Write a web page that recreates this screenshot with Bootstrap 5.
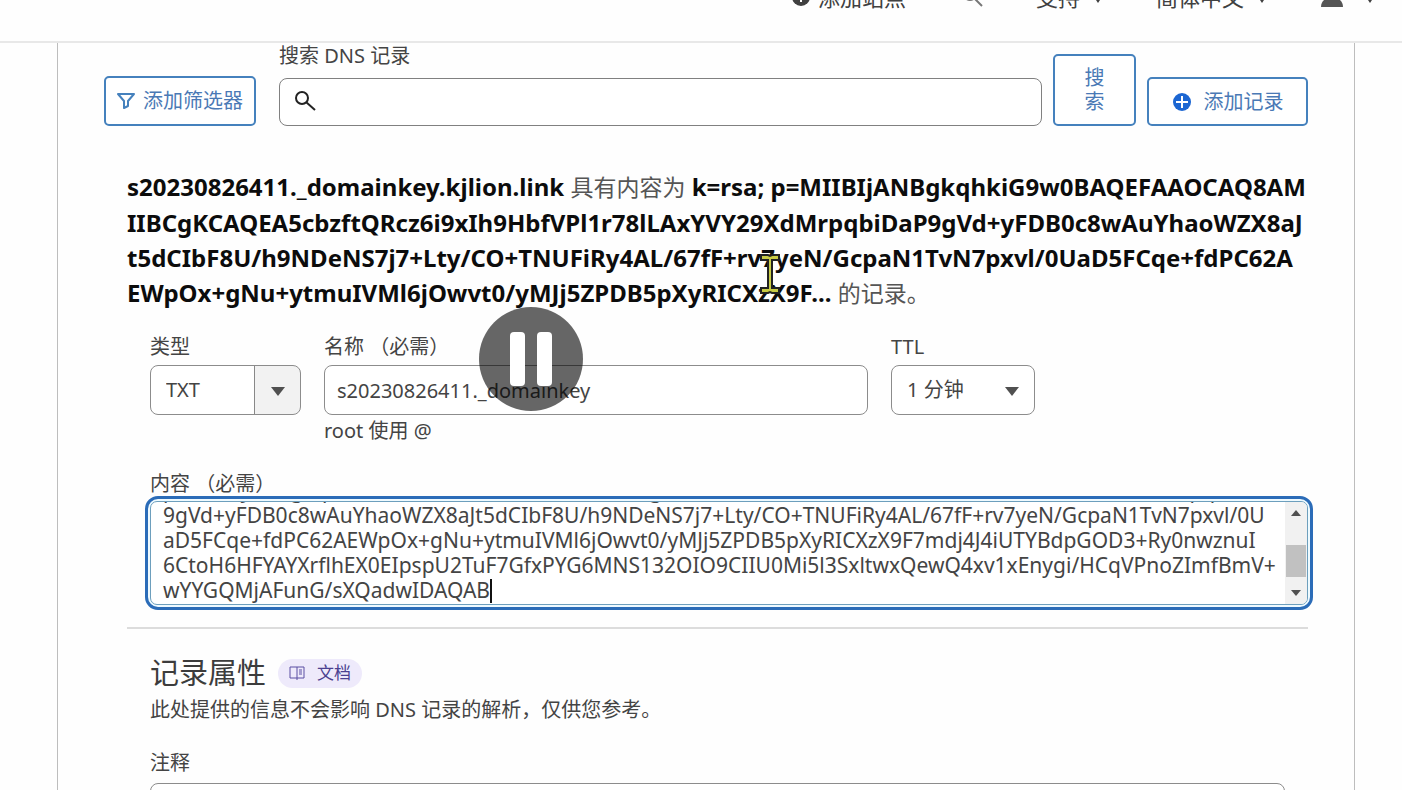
<!DOCTYPE html>
<html lang="zh-CN">
<head>
<meta charset="utf-8">
<meta name="viewport" content="width=device-width, initial-scale=1">
<title>DNS 记录</title>
<link href="https://cdn.jsdelivr.net/npm/bootstrap@5.3.0/dist/css/bootstrap.min.css" rel="stylesheet">
<style>
  body { font: 20px/24px "Noto Sans", "Noto Sans CJK SC", sans-serif; font-weight: 400; color: #444; background: #fefefe; height: 100vh; overflow: hidden; }
  .topbar { height: 90px; margin-top: -47px; padding-right: 22px; border-bottom: 2px solid #e8e8e8; font-size: 22px; }
  .topbar a { color: #404040; text-decoration: none; display: flex; align-items: center; }
  .panel { margin: 0 47px 0 57px; padding: 1px 46px 0; border: solid #bdbdbd; border-width: 0 1px; height: calc(100vh - 43px); overflow: hidden; }
  .outline-blue { color: #4a79b5; border: 2px solid #4581bd; border-radius: 5px; background: #fff; font-size: 20px; line-height: 24px; padding: 0; height: 50px; }
  .w-filter { width: 152px; }
  .w-add { width: 161px; height: 49px; margin-left: 11px; }
  .w-search { width: 83px; height: 72px; }
  .search-col { margin: 0 11px 0 23px; }
  .search-col label { margin-bottom: 10px; }
  .field { border: 1px solid #8c8c8c; border-radius: 8px; background-color: #fff; color: #444; font-size: 20px; line-height: 24px; height: 50px; padding: 0 12px; }
  .field:focus { box-shadow: none; }
  .search-field { height: 48px; border-color: #808080; padding-left: 48px; }
  .glass { left: 16px; top: 13px; }
  .form-area { margin-left: 23px; }
  .inset { padding: 0 23px; }
  .summary { margin: 43px 23px 0; font-size: 24px; line-height: 35px; color: #555; white-space: nowrap; }
  .summary b { color: #0c0c0c; font-weight: 700; }
  .summary span { font-size: 23px; }
  .record-row { gap: 23px; margin-top: 24px; }
  .record-row label { margin-bottom: 6px; }
  .pick { appearance: none; background-image: none; padding-left: 15px; width: 151px; }
  .pick-type { background: linear-gradient(to right, #fff 103px, #888 103px 104px, #f2f2f2 104px); }
  .pick-ttl { width: 144px; }
  .tri { right: 16px; top: 22px; pointer-events: none; }
  .name-col { flex: 0 1 544px; }
  .next-label { margin-top: 29px; }
  .content-wrap { margin: 0 -5px 0 18px; border: 3px solid #2b6cb8; border-radius: 13px; padding: 2px; background: #eefaff; height: 114px; }
  .content-in { border: 1px solid #6d9fbd; border-radius: 7px; background: #fff; height: 104px; overflow: hidden; }
  .content-in textarea { border: 0; outline: 0; resize: none; overflow: hidden; height: 102px; padding: 0 0 0 12px; margin: 0; color: #444; font-size: 21px; line-height: 25px; white-space: pre; background: transparent; }
  .bar-track { width: 22px; background: #f1f1f1; }
  .bar-thumb { width: 20px; height: 32px; background: #c1c1c1; }
  .caret { left: 339px; bottom: 1px; width: 2px; height: 24px; background: #111; }
  .rule { height: 2px; background: #dcdcdc; margin-top: 17px; }
  .attr-head { margin-top: 26px; margin-bottom: 7px; }
  .attr-title { font-size: 29px; line-height: 36px; margin: 0 12px 0 0; color: #3c3c3c; font-weight: 400; }
  .doc-pill { width: 84px; height: 29px; border-radius: 15px; background: #eeeafb; color: #4b4190; font-size: 17px; text-decoration: none; }
  .pause { position: fixed; left: 479px; top: 307px; width: 104px; height: 104px; border: 0; padding: 0; background: none; }
  .ibeam { position: fixed; left: 759px; top: 253px; }
</style>
</head>
<body>
<header class="topbar d-flex align-items-center justify-content-end">
  <a href="#"><svg width="18" height="18" viewBox="0 0 18 18" class="me-2"><circle cx="9" cy="9" r="9" fill="#404040"/><path d="M9 4v10M4 9h10" stroke="#fff" stroke-width="2"/></svg>添加站点</a>
  <a href="#" class="ms-5 ps-2" aria-label="搜索"><svg width="22" height="22" viewBox="0 0 22 22" fill="none" stroke="#777" stroke-width="2"><circle cx="8" cy="8" r="6"/><path d="M12 12L20 20"/></svg></a>
  <a href="#" class="ms-5 ps-1">支持<svg class="ms-2" width="20" height="14" viewBox="0 0 20 14"><path d="M4 4h12l-6 9z" fill="#404040"/></svg></a>
  <a href="#" class="ms-5">简体中文<svg class="ms-2" width="20" height="14" viewBox="0 0 20 14"><path d="M4 4h12l-6 9z" fill="#404040"/></svg></a>
  <a href="#" class="ms-5" aria-label="账户"><svg width="24" height="24" viewBox="0 0 24 24" fill="#555"><circle cx="12" cy="6" r="6"/><path d="M1 22C1 9 23 9 23 22z"/></svg><svg class="ms-3" width="20" height="14" viewBox="0 0 20 14"><path d="M4 4h12l-6 9z" fill="#404040"/></svg></a>
</header>
<main class="panel">
  <form class="d-flex align-items-end">
    <button type="button" class="btn outline-blue w-filter d-flex align-items-center justify-content-center"><svg class="me-2" width="18" height="18" viewBox="0 0 18 18" fill="none" stroke="#4581bd" stroke-width="2" stroke-linejoin="round"><path d="M1 2h16l-6 7v5l-4 2V9z"/></svg>添加筛选器</button>
    <div class="flex-grow-1 search-col">
      <label for="q" class="d-block">搜索 DNS 记录</label>
      <div class="position-relative">
        <input id="q" type="text" class="form-control field search-field">
        <svg class="position-absolute glass" width="22" height="22" viewBox="0 0 22 22" fill="none" stroke="#222" stroke-width="2"><circle cx="7" cy="7" r="6"/><path d="M11 11L20 19"/></svg>
      </div>
    </div>
    <button type="button" class="btn outline-blue w-search">搜<br>索</button>
    <button type="button" class="btn outline-blue w-add d-flex align-items-center justify-content-center"><svg class="me-2" width="20" height="20" viewBox="0 0 20 20"><circle cx="10" cy="10" r="9" fill="#1c66d2"/><path d="M10 4v12M4 10h12" stroke="#fff" stroke-width="2"/></svg><span class="ps-1">添加记录</span></button>
  </form>

  <p class="summary"><b>s20230826411._domainkey.kjlion.link</b> <span>具有内容为</span> <b>k=rsa; p=MIIBIjANBgkqhkiG9w0BAQEFAAOCAQ8AM<br>IIBCgKCAQEA5cbzftQRcz6i9xIh9HbfVPl1r78lLAxYVY29XdMrpqbiDaP9gVd+yFDB0c8wAuYhaoWZX8aJ<br>t5dCIbF8U/h9NDeNS7j7+Lty/CO+TNUFiRy4AL/67fF+rv7yeN/GcpaN1TvN7pxvl/0UaD5FCqe+fdPC62A<br>EWpOx+gNu+ytmuIVMl6jOwvt0/yMJj5ZPDB5pXyRICXzX9F...</b> <span>的记录。</span></p>

  <form class="form-area">
    <div class="inset">
      <div class="d-flex record-row">
        <div>
          <label for="type" class="d-block">类型</label>
          <div class="position-relative">
            <select id="type" class="d-block field pick pick-type"><option>TXT</option></select>
            <svg class="position-absolute tri" width="14" height="9" viewBox="0 0 14 9"><path d="M0 0h14L7 9z" fill="#505050"/></svg>
          </div>
        </div>
        <div class="name-col">
          <label for="name" class="d-block">名称 （必需）</label>
          <input id="name" type="text" class="form-control field" value="s20230826411._domainkey">
          <div class="pt-1">root 使用 @</div>
        </div>
        <div>
          <label for="ttl" class="d-block">TTL</label>
          <div class="position-relative">
            <select id="ttl" class="d-block field pick pick-ttl"><option>1 分钟</option></select>
            <svg class="position-absolute tri" width="14" height="9" viewBox="0 0 14 9"><path d="M0 0h14L7 9z" fill="#505050"/></svg>
          </div>
        </div>
      </div>
      <label for="content" class="d-block next-label">内容 （必需）</label>
    </div>
    <div class="content-wrap">
      <div class="content-in d-flex position-relative">
        <textarea id="content" class="flex-grow-1">k=rsa;
p=MIIBIjANBgkqhkiG9w0BAQEFAAOCAQ8AMIIBCgKCAQEA5cbzftQRcz6i9xIh9HbfVPl1r78lLAxYVY29XdMrpqbiDaP
9gVd+yFDB0c8wAuYhaoWZX8aJt5dCIbF8U/h9NDeNS7j7+Lty/CO+TNUFiRy4AL/67fF+rv7yeN/GcpaN1TvN7pxvl/0U
aD5FCqe+fdPC62AEWpOx+gNu+ytmuIVMl6jOwvt0/yMJj5ZPDB5pXyRICXzX9F7mdj4J4iUTYBdpGOD3+Ry0nwznuI
6CtoH6HFYAYXrflhEX0EIpspU2TuF7GfxPYG6MNS132OIO9CIIU0Mi5l3SxltwxQewQ4xv1xEnygi/HCqVPnoZImfBmV+
wYYGQMjAFunG/sXQadwIDAQAB</textarea>
        <span class="position-absolute caret"></span>
        <div class="bar-track d-flex flex-column align-items-center justify-content-between py-2" aria-hidden="true">
          <svg width="10" height="6" viewBox="0 0 10 6"><path d="M0 6h10L5 0z" fill="#505050"/></svg>
          <div class="bar-thumb mt-3"></div>
          <svg width="10" height="6" viewBox="0 0 10 6"><path d="M0 0h10L5 6z" fill="#505050"/></svg>
        </div>
      </div>
    </div>
    <div class="rule"></div>
    <div class="d-flex align-items-center inset attr-head">
      <h2 class="attr-title">记录属性</h2>
      <a href="#" class="doc-pill d-flex align-items-center justify-content-center"><svg class="me-2" width="16" height="16" viewBox="0 0 16 16" fill="none" stroke="#5a4fa3"><path d="M1 2h14v11H1zM8 2v13M10 5h3M10 7h3M10 9h3"/></svg><span class="ps-1">文档</span></a>
    </div>
    <div class="inset">
      <div>此处提供的信息不会影响 DNS 记录的解析，仅供您参考。</div>
      <label for="note" class="d-block next-label mb-2">注释</label>
      <input id="note" type="text" class="form-control field">
    </div>
  </form>
</main>
<button type="button" class="pause" aria-label="暂停"><svg class="d-block" width="104" height="104" viewBox="0 0 104 104"><circle cx="52" cy="52" r="52" fill="#000" fill-opacity=".6"/><rect x="31" y="25" width="15" height="54" rx="4" fill="#fff"/><rect x="58" y="25" width="15" height="54" rx="4" fill="#fff"/></svg></button>
<svg class="ibeam" width="22" height="42" viewBox="0 0 22 42"><path d="M2 2h7l2 1 2-1h7v5h-7v28h7v5h-7l-2-1-2 1H2v-5h7V7H2z" fill="#c9cc45" stroke="#222" stroke-width="2"/></svg>
<script src="https://cdn.jsdelivr.net/npm/bootstrap@5.3.0/dist/js/bootstrap.bundle.min.js"></script>
<script>
  const box = document.getElementById('content');
  box.scrollTop = box.scrollHeight;
</script>
</body>
</html>
